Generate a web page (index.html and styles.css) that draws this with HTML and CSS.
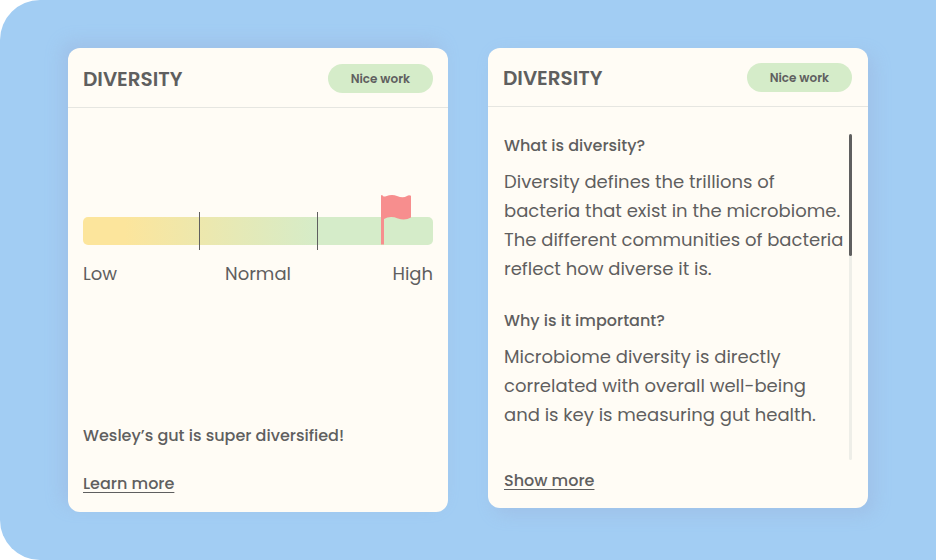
FILE: index.html
```html
<!DOCTYPE html>
<html lang="en">
<head>
  <meta charset="UTF-8" />
  <meta name="viewport" content="width=device-width, initial-scale=1.0" />
  <title>Diversity</title>
  <link rel="stylesheet" href="styles.css">
</head>
<body>

  <main class="panel">

    <!-- Result card -->
    <section class="card card-result">
      <header class="card-header">
        <h2>DIVERSITY</h2>
        <span class="badge">Nice work</span>
      </header>
      <div class="card-body">
        <div class="scale">
          <div class="bar">
            <span class="tick tick-low"></span>
            <span class="tick tick-high"></span>
            <svg class="flag" width="30" height="50" viewBox="0 0 30 50" aria-hidden="true">
              <path d="M0 0.5 Q1 -0.5 2 1 Q3 2 5 1.2 Q11 -1 16 1 Q22 3.5 26 1 Q28 -0.5 30 0.8 V22.5 Q24 26 17 23.5 Q9 20.5 3 24 V49.5 H0 Z" fill="#f78e8e" />
            </svg>
          </div>
          <div class="scale-labels">
            <span>Low</span>
            <span>Normal</span>
            <span>High</span>
          </div>
        </div>
        <p class="summary">Wesley’s gut is super diversified!</p>
        <a class="link" href="#about">Learn more</a>
      </div>
    </section>

    <!-- Explanation card -->
    <section class="card card-about" id="about">
      <header class="card-header">
        <h2>DIVERSITY</h2>
        <span class="badge">Nice work</span>
      </header>
      <div class="card-body">
        <div class="reader">
          <div class="reader-text">
            <h3>What is diversity?</h3>
            <p>Diversity defines the trillions of bacteria that exist in the microbiome. The different communities of bacteria reflect how diverse it is.</p>
            <h3>Why is it important?</h3>
            <p>Microbiome diversity is directly correlated with overall well-being and is key is measuring gut health.</p>
          </div>
          <div class="track"><div class="thumb"></div></div>
        </div>
        <a class="link" href="#more">Show more</a>
      </div>
    </section>

  </main>

</body>
</html>
```

FILE: styles.css
```css
* {
  box-sizing: border-box;
}
body {
  margin: 0;
  background: #fff;
  color: #5f5f5f;
  font-family: Poppins, Inter, sans-serif;
  font-size: 18px;
  line-height: 24px;
}
h2, h3, p {
  margin: 0;
}
.panel {
  display: flex;
  align-items: flex-start;
  gap: 40px;
  min-height: 100vh;
  padding: 48px 68px;
  background: #a2cdf3;
  border-radius: 40px 0 0 40px;
}

/* Cards */
.card {
  flex: 1;
  min-width: 0;
  background: #fffcf5;
  border-radius: 12px;
}
.card-result {
  box-shadow: -6px -6px 16px rgba(155, 175, 218, 0.4);
}
.card-about {
  box-shadow: 6px 6px 16px rgba(155, 175, 218, 0.4);
}
.card-header {
  display: flex;
  justify-content: space-between;
  align-items: center;
  padding: 15px 16px 14px 15px;
  border-bottom: 1px solid #e6e6e1;
}
.card-result .card-header {
  padding: 16px 15px 14px;
}
.card-header h2 {
  font-size: 20px;
  font-weight: 600;
}
.badge {
  padding: 0 23px;
  background: #d5ecc9;
  border-radius: 15px;
  font-size: 12px;
  font-weight: 600;
  line-height: 29px;
}
.link {
  display: block;
  width: fit-content;
  color: inherit;
  font-size: 16px;
  font-weight: 500;
  text-underline-offset: 3px;
}

/* Result card */
.card-result .card-body {
  padding: 109px 15px 16px;
}
.bar {
  position: relative;
  height: 28px;
  background: linear-gradient(90deg, #fce59c 12%, #d5ecc9 68%);
  border-radius: 5px;
}
.tick {
  position: absolute;
  top: -5px;
  bottom: -5px;
  width: 1px;
  background: #5f5f5f;
}
.tick-low {
  left: 33%;
}
.tick-high {
  right: 33%;
}
.flag {
  position: absolute;
  bottom: 0;
  left: 85%;
}
.scale-labels {
  display: grid;
  grid-template-columns: 1fr auto 1fr;
  margin-top: 17px;
}
.scale-labels span:last-child {
  text-align: right;
}
.summary {
  margin: 138px 0 24px;
  font-size: 16px;
  font-weight: 500;
}

/* Explanation card */
.card-about .card-body {
  padding: 27px 16px 15px;
}
.reader {
  display: flex;
  gap: 5px;
  margin-bottom: 9px;
}
.reader-text {
  flex: 1;
  padding-bottom: 31px;
}
.reader-text h3 {
  font-size: 16px;
  font-weight: 500;
}
.reader-text p {
  margin-top: 9px;
  line-height: 29px;
}
.reader-text p + h3 {
  margin-top: 26px;
}
.track {
  width: 3px;
  background: #eeeee8;
  border-radius: 2px;
}
.thumb {
  height: 122px;
  background: #5f5f5f;
  border-radius: 2px;
}
```
